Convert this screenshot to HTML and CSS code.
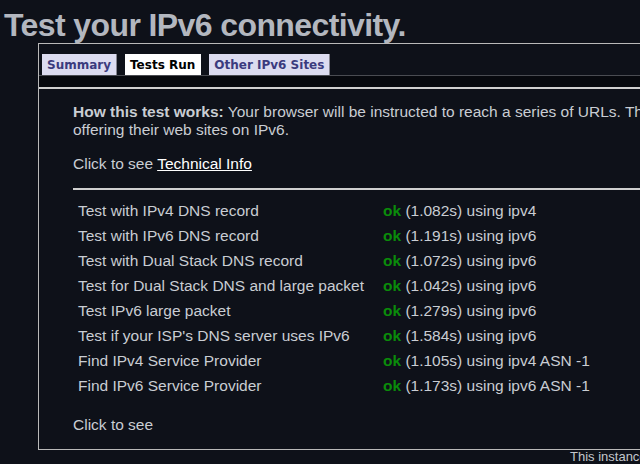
FILE: index.html
```html
<!DOCTYPE html>
<html>
<head>
<meta charset="utf-8">
<link rel="stylesheet" href="styles.css">
</head>
<body>
<div class="page">
  <h1 class="title">Test your IPv6 connectivity.</h1>
  <div class="box">
    <div class="tabs">
      <span class="tab">Summary</span>
      <span class="tab active">Tests Run</span>
      <span class="tab">Other IPv6 Sites</span>
    </div>
    <div class="strip"></div>
    <div class="content">
      <p class="para"><b>How this test works:</b> Your browser will be instructed to reach a series of URLs. The URLs are designed to test whether your browser supports IPv6 and whether you will have problems as more publishers start<br>offering their web sites on IPv6.</p>
      <p class="para">Click to see <a class="link" href="#">Technical Info</a></p>
      <hr class="rule">
      <table class="results">
        <tr><td class="name">Test with IPv4 DNS record</td><td class="res"><span class="ok">ok</span> (1.082s) using ipv4</td></tr>
        <tr><td class="name">Test with IPv6 DNS record</td><td class="res"><span class="ok">ok</span> (1.191s) using ipv6</td></tr>
        <tr><td class="name">Test with Dual Stack DNS record</td><td class="res"><span class="ok">ok</span> (1.072s) using ipv6</td></tr>
        <tr><td class="name">Test for Dual Stack DNS and large packet</td><td class="res"><span class="ok">ok</span> (1.042s) using ipv6</td></tr>
        <tr><td class="name">Test IPv6 large packet</td><td class="res"><span class="ok">ok</span> (1.279s) using ipv6</td></tr>
        <tr><td class="name">Test if your ISP's DNS server uses IPv6</td><td class="res"><span class="ok">ok</span> (1.584s) using ipv6</td></tr>
        <tr><td class="name">Find IPv4 Service Provider</td><td class="res"><span class="ok">ok</span> (1.105s) using ipv4 ASN -1</td></tr>
        <tr><td class="name">Find IPv6 Service Provider</td><td class="res"><span class="ok">ok</span> (1.173s) using ipv6 ASN -1</td></tr>
      </table>
      <p class="para last">Click to see</p>
    </div>
  </div>
  <div class="footer">This instance</div>
</div>
</body>
</html>
```
FILE: styles.css
```css
html, body {
  margin: 0;
  padding: 0;
  background: #0e1119;
  overflow: hidden;
}
body {
  font-family: "Liberation Sans", Arial, sans-serif;
  color: #c9cdd3;
}
.page {
  width: 760px;
  padding-left: 4px;
}
.title {
  margin: 7px 0 0 0;
  font-size: 32px;
  line-height: 36px;
  font-weight: bold;
  letter-spacing: -0.6px;
  color: #b3b7bf;
  white-space: nowrap;
}
.box {
  margin-left: 34px;
  width: 680px;
  border: 1px solid #b9b9b9;
}
.tabs {
  display: flex;
  gap: 8px;
  padding: 10px 0 0 3px;
  border-bottom: 1px solid #4a4c52;
}
.tab {
  height: 21px;
  line-height: 22px;
  padding: 0 5px;
  background: #dcdcf0;
  color: #3b3b7e;
  font-family: "DejaVu Sans", Verdana, sans-serif;
  font-size: 12px;
  font-weight: bold;
  border-right: 1px solid #85858f;
  white-space: nowrap;
}
.tab.active {
  background: #ffffff;
  color: #000000;
  border-right-color: #ffffff;
}
.strip {
  height: 11px;
  background: #07090e;
  border-bottom: 2px solid #d0d0d0;
}
.content {
  padding: 14px 0 14px 34px;
  font-size: 15.5px;
  line-height: 18.4px;
}
.para {
  margin: 0 0 15px 0;
  white-space: nowrap;
}
.para b {
  color: #c9cdd3;
}
.para.last {
  margin: 18px 0 0 0;
}
.link {
  color: #ffffff;
  text-decoration: underline;
}
.rule {
  margin: 11px 0 0 0;
  border: 0;
  height: 2px;
  background: #d0d0d0;
}
.results {
  margin-top: 8px;
  border-collapse: collapse;
}
.results td {
  padding: 0 5px;
  height: 25px;
  line-height: 25px;
  white-space: nowrap;
  vertical-align: top;
}
.name {
  width: 295px;
}
.ok {
  color: #0a8c0a;
  font-weight: bold;
}
.footer {
  padding-left: 566px;
  font-size: 13px;
  line-height: 14px;
  color: #c3c7cd;
  white-space: nowrap;
}
```
